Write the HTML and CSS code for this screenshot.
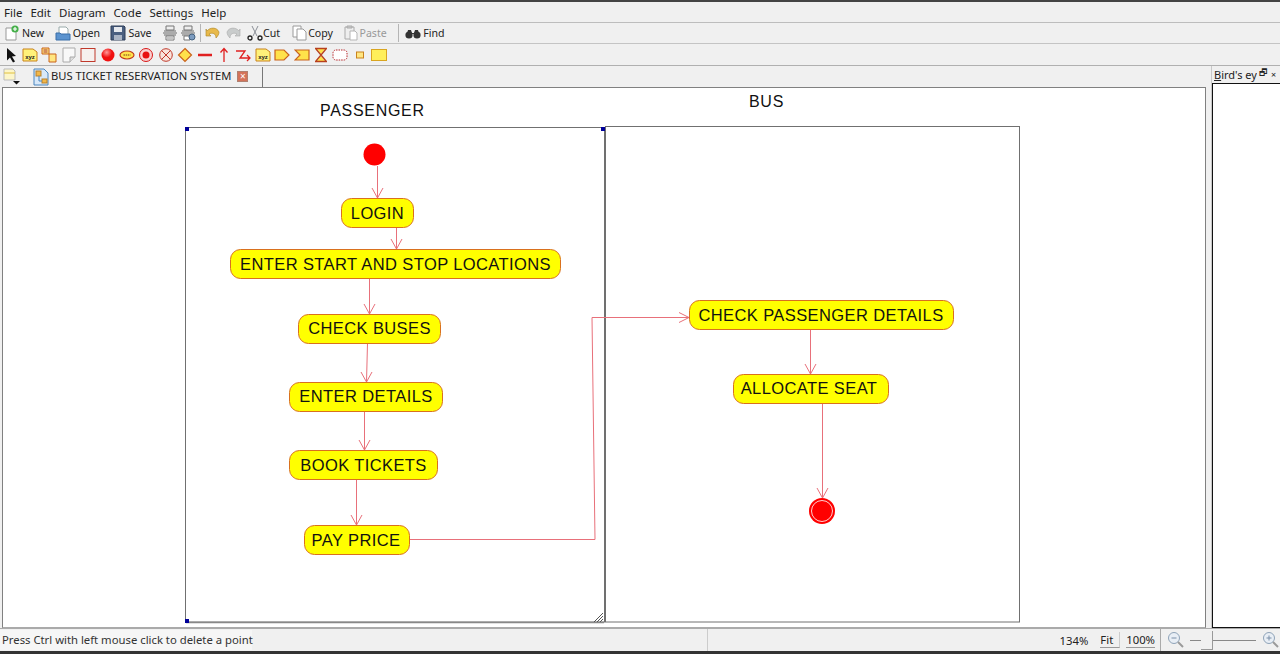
FILE: index.html
```html
<!DOCTYPE html>
<html lang="en">
<head>
    <meta charset="UTF-8">
    <title>Activity diagram editor</title>
    <link rel="stylesheet" href="styles.css">
</head>
<body>
    <nav class="menubar">
        <span>File</span><span>Edit</span><span>Diagram</span><span>Code</span><span>Settings</span><span>Help</span>
    </nav>

    <div class="toolbar">
        <button class="btn"><svg width="16" height="16" viewBox="0 0 16 16"><path d="M2 3h7l3 3v9H2z" fill="#fff" stroke="#999"/><circle cx="11" cy="4" r="3.6" fill="#46b04a"/><path d="M9 4h4M11 2v4" stroke="#fff" stroke-width="1.2"/></svg><span class="btn-label">New</span></button>
        <button class="btn"><svg width="16" height="16" viewBox="0 0 16 16"><path d="M4 2h7l2 2v6H4z" fill="#fff" stroke="#9aa"/><path d="M1 8h4l1 1h9v6H1z" fill="#5b93cf" stroke="#3a6ea8"/></svg><span class="btn-label">Open</span></button>
        <button class="btn"><svg width="16" height="16" viewBox="0 0 16 16"><path d="M1 1h13l1 1v13H1z" fill="#4a5f80" stroke="#2f3f58"/><path d="M4 2h8v5H4z" fill="#e6e9ee"/><path d="M4 10h8v5H4z" fill="#aab4c4"/></svg><span class="btn-label">Save</span></button>
        <button class="btn btn-print"><svg width="16" height="16" viewBox="0 0 16 16"><path d="M4 1h8v4H4z" fill="#eee" stroke="#777"/><path d="M2 6h12M1 8h14M2 10h12" stroke="#666"/><path d="M4 11h8v4H4z" fill="#fff" stroke="#777"/><path d="M5 13h6" stroke="#888"/></svg></button>
        <button class="btn btn-print"><svg width="16" height="16" viewBox="0 0 16 16"><path d="M4 1h8v4H4z" fill="#eee" stroke="#777"/><path d="M2 6h12M1 8h14M2 10h12" stroke="#666"/><path d="M4 11h6v4H4z" fill="#fff" stroke="#777"/><circle cx="12" cy="12" r="3" fill="#7d9cc0" stroke="#44617f"/></svg></button>
        <i class="sep"></i>
        <button class="btn btn-undo"><svg width="16" height="16" viewBox="0 0 16 16"><path d="M2 6c3-4 10-4 12 1 0 2-1 4-3 6 0-4-3-6-7-4l2 2H1V4z" fill="#e8b94a" stroke="#a98324" stroke-width=".6"/></svg></button>
        <button class="btn btn-undo"><svg width="16" height="16" viewBox="0 0 16 16"><path d="M14 6C11 2 4 2 2 7c0 2 1 4 3 6 0-4 3-6 7-4l-2 2h5V4z" fill="#c9cccc" stroke="#aaa" stroke-width=".6"/></svg></button>
        <button class="btn btn-tight btn-cut"><svg width="16" height="16" viewBox="0 0 16 16" fill="none"><path d="M5 1l5 10M11 1L6 11" stroke="#8a8f96"/><circle cx="3" cy="13" r="2" stroke="#222" stroke-width="1.3"/><circle cx="13" cy="13" r="2" stroke="#222" stroke-width="1.3"/></svg><span class="btn-label">Cut</span></button>
        <button class="btn btn-tight"><svg width="16" height="16" viewBox="0 0 16 16"><path d="M1 1h8v11H1z" fill="#fff" stroke="#9a9a9a"/><path d="M5 4h6l3 3v8H5z" fill="#fff" stroke="#9a9a9a"/></svg><span class="btn-label">Copy</span></button>
        <button class="btn btn-tight off"><svg width="16" height="16" viewBox="0 0 16 16"><path d="M2 2h9v12H2z" fill="#eee" stroke="#aaa"/><path d="M4 1h5v2H4z" fill="#ccc" stroke="#aaa"/><path d="M7 6h5l2 2v7H7z" fill="#fff" stroke="#b5b5b5"/></svg><span class="btn-label">Paste</span></button>
        <i class="sep sep-find"></i>
        <button class="btn"><svg width="16" height="16" viewBox="0 0 16 16" fill="#333"><circle cx="4" cy="10" r="3.6"/><circle cx="12" cy="10" r="3.6"/><path d="M3 5h3l1 3h2l1-3h3l1 4H2z"/></svg><span class="btn-label">Find</span></button>
    </div>

    <div class="toolbar toolbar-shapes">
        <span class="tool"><svg width="16" height="16" viewBox="0 0 16 16"><path d="M4 1l9 8-4 .5 3 5-2 1-3-5-3 3z" fill="#111"/></svg></span>
        <span class="tool"><svg width="16" height="16" viewBox="0 0 16 16"><path d="M1 2h10l4 3v9H1z" fill="#fff27a" stroke="#c9821c"/><text x="8" y="12" class="mini">xyz</text></svg></span>
        <span class="tool"><svg width="16" height="16" viewBox="0 0 16 16"><path d="M1 1h7v6H1z" fill="#ffe680" stroke="#c9621c"/><path d="M8 7h7v8H8z" fill="#ffe680" stroke="#c9621c"/><path d="M2.500 3h4M2.500 5h4" stroke="#a33"/></svg></span>
        <span class="tool"><svg width="16" height="16" viewBox="0 0 16 16"><path d="M2 1h12v9l-5 5H2z" fill="#f8f8f8" stroke="#aaa"/><path d="M9 15v-5h5" fill="#ddd" stroke="#aaa"/></svg></span>
        <span class="tool"><svg width="16" height="16" viewBox="0 0 16 16"><rect x="1" y="1.500" width="14" height="13" fill="#f6f0ee" stroke="#c0392b"/></svg></span>
        <span class="tool"><svg width="16" height="16" viewBox="0 0 16 16"><defs><radialGradient id="ball" cx=".4" cy=".3" r=".8"><stop offset="0" stop-color="#ff9a9a"/><stop offset=".5" stop-color="#f01010"/></radialGradient></defs><circle cx="8" cy="8" r="6.500" fill="url(#ball)"/></svg></span>
        <span class="tool"><svg width="16" height="16" viewBox="0 0 16 16"><ellipse cx="8" cy="8" rx="7" ry="4" fill="#ffe24a" stroke="#c03a1c" stroke-width="1.200"/><path d="M4.500 8h7" stroke="#7a3b12" stroke-dasharray="1.500 .7"/></svg></span>
        <span class="tool"><svg width="16" height="16" viewBox="0 0 16 16"><circle cx="8" cy="8" r="6.500" fill="#f8d0d0" stroke="#d81818"/><circle cx="8" cy="8" r="3.500" fill="#e81010"/></svg></span>
        <span class="tool"><svg width="16" height="16" viewBox="0 0 16 16" fill="none" stroke="#c0392b"><circle cx="8" cy="8" r="6.300" fill="#f8e4dc"/><path d="M3.500 3.500l9 9M12.500 3.500l-9 9"/></svg></span>
        <span class="tool"><svg width="16" height="16" viewBox="0 0 16 16"><path d="M8 1.500L14.500 8 8 14.500 1.500 8z" fill="#ffe24a" stroke="#c9621c" stroke-width="1.200"/></svg></span>
        <span class="tool"><svg width="16" height="16" viewBox="0 0 16 16"><path d="M1 8h14" stroke="#e02020" stroke-width="2.500"/></svg></span>
        <span class="tool"><svg width="16" height="16" viewBox="0 0 16 16" fill="none" stroke="#e02020" stroke-width="1.300"><path d="M8 15V2M4.500 5.500L8 1.500l3.500 4"/></svg></span>
        <span class="tool"><svg width="16" height="16" viewBox="0 0 16 16" fill="none" stroke="#e02020" stroke-width="1.300"><path d="M1 4h9L5 11h10M12 8l3 3-3 3"/></svg></span>
        <span class="tool"><svg width="16" height="16" viewBox="0 0 16 16"><path d="M1 2h10l4 3v9H1z" fill="#fff27a" stroke="#c9821c"/><text x="8" y="12" class="mini">xyz</text></svg></span>
        <span class="tool"><svg width="16" height="16" viewBox="0 0 16 16"><path d="M1 3h9l5 5-5 5H1z" fill="#ffe24a" stroke="#c9621c" stroke-width="1.200"/></svg></span>
        <span class="tool"><svg width="16" height="16" viewBox="0 0 16 16"><path d="M1 3h14v10H1l5-5z" fill="#ffe24a" stroke="#c9621c" stroke-width="1.200"/></svg></span>
        <span class="tool"><svg width="16" height="16" viewBox="0 0 16 16"><path d="M4 2h8L8 7z" fill="#ffe24a"/><path d="M4 14h8L8 9z" fill="#ffe24a"/><path d="M2 1.500h12M2 14.500h12M3 2l10 12M13 2L3 14" fill="none" stroke="#b8401c" stroke-width="1.300"/></svg></span>
        <span class="tool"><svg width="16" height="16" viewBox="0 0 16 16"><rect x="1" y="3" width="14" height="10" rx="3" fill="#fff" stroke="#b8282c" stroke-dasharray="1.500 1"/></svg></span>
        <span class="tool"><svg width="16" height="16" viewBox="0 0 16 16"><rect x="4.500" y="5" width="7" height="6" fill="#ffe680" stroke="#c9821c"/></svg></span>
        <span class="tool"><svg width="16" height="16" viewBox="0 0 16 16"><rect x=".500" y="2.500" width="15" height="11" fill="#ffef5a" stroke="#d9a520"/></svg></span>
    </div>

    <div class="main">
        <div class="workspace">
            <div class="tabbar">
                <span class="tab-menu"><svg width="20" height="18" viewBox="0 0 20 18"><path d="M1 1h9l2 2v9H1z" fill="#fdf6c8" stroke="#bbb"/><path d="M1 5h11" stroke="#e0c040"/><path d="M10 13h7l-3.500 3.500z" fill="#111"/></svg></span>
                <div class="tab">
                    <svg width="16" height="18" viewBox="0 0 16 18"><path d="M1 1h10l4 4v12H1z" fill="#d8e8f8" stroke="#4a86c0"/><rect x="3" y="3" width="5" height="5" fill="#f2b84a" stroke="#b8802a"/><rect x="9" y="11" width="5" height="4" fill="#f2b84a" stroke="#b8802a"/><path d="M6 8v5h3" fill="none" stroke="#4a86c0"/></svg>
                    <span class="tab-title">BUS TICKET RESERVATION SYSTEM</span>
                    <span class="tab-close">×</span>
                </div>
            </div>
            <div class="canvas">
                <svg class="diagram" width="1203" height="540" viewBox="3 88 1203 540">
                    <text x="320" y="116" class="title">PASSENGER</text>
                    <text x="749" y="107" class="title">BUS</text>

                    <rect x="185.500" y="127.500" width="419" height="494.500" class="lane"/>
                    <rect x="605.500" y="126.500" width="414" height="495.500" class="lane"/>
                    <path d="M186 622.500h418" class="lane-edge"/>
                    <path d="M594 622l9-9M597 622l6-6M600 622l3-3" class="hatch"/>
                    <rect x="185" y="127" width="4" height="4" class="handle"/>
                    <rect x="601" y="127" width="4" height="4" class="handle"/>
                    <rect x="185" y="619" width="4" height="4" class="handle"/>

                    <g class="edge">
                        <path d="M377.500 166v32M372 188l5.500 10 5.500-10"/>
                        <path d="M396.500 227v22M391 239l5.500 10 5.500-10"/>
                        <path d="M369.500 278v36M364 304l5.500 10 5.500-10"/>
                        <path d="M367.500 343l-1 39M361 372l5.500 10 5.500-10"/>
                        <path d="M364.500 411v39M359 440l5.500 10 5.500-10"/>
                        <path d="M356.500 479v46M351 515l5.500 10 5.500-10"/>
                        <path d="M409 539.500h186l-3-222h97M679 312.500l10 5-10 5"/>
                        <path d="M810.500 329v45M805 364l5.500 10 5.500-10"/>
                        <path d="M822.500 403v95M817 488l5.500 10 5.500-10"/>
                    </g>

                    <circle cx="374.500" cy="154.500" r="11" class="start"/>

                    <rect x="341.500" y="198.500" width="72" height="29" rx="10" class="node"/>
                    <text x="377.500" y="219" class="label">LOGIN</text>
                    <rect x="230.500" y="249.500" width="330" height="29" rx="10" class="node"/>
                    <text x="395.500" y="270" class="label">ENTER START AND STOP LOCATIONS</text>
                    <rect x="298.500" y="314.500" width="142" height="29" rx="10" class="node"/>
                    <text x="369.500" y="334" class="label">CHECK BUSES</text>
                    <rect x="289.500" y="382.500" width="153" height="29" rx="10" class="node"/>
                    <text x="366" y="402" class="label">ENTER DETAILS</text>
                    <rect x="289.500" y="450.500" width="148" height="29" rx="10" class="node"/>
                    <text x="363.500" y="471" class="label">BOOK TICKETS</text>
                    <rect x="304.500" y="525.500" width="105" height="29" rx="10" class="node"/>
                    <text x="356" y="546" class="label">PAY PRICE</text>
                    <rect x="689.500" y="300.500" width="264" height="29" rx="10" class="node"/>
                    <text x="821" y="321" class="label">CHECK PASSENGER DETAILS</text>
                    <rect x="733.500" y="374.500" width="155" height="29" rx="10" class="node"/>
                    <text x="809" y="394" class="label">ALLOCATE SEAT</text>

                    <circle cx="822" cy="511" r="13" class="start"/>
                    <circle cx="822" cy="511" r="10.500" class="end-ring"/>
                </svg>
            </div>
        </div>
        <aside class="birds">
            <div class="birds-head"><span class="birds-title"><u>B</u>ird's ey</span><span class="birds-btn">🗗</span><span class="birds-btn">×</span></div>
            <div class="birds-view"></div>
        </aside>
    </div>

    <footer class="statusbar">
        <div class="status-msg">Press Ctrl with left mouse click to delete a point</div>
        <div class="status-fill"></div>
        <div class="status-zoom">
            <span class="zoom-val">134%</span>
            <span class="zoom-btn">Fit</span>
            <span class="zoom-btn zoom-btn-last">100%</span>
        </div>
        <span class="zoom-icon"><svg width="18" height="18" viewBox="0 0 18 18" fill="none"><circle cx="7" cy="7" r="5.500" fill="#e8eef5" stroke="#8fa3b8"/><path d="M4.500 7h5" stroke="#7a8fa8"/><path d="M11 11l5 5" stroke="#9a9a9a" stroke-width="2"/></svg></span>
        <div class="slider"><i class="thumb"></i></div>
        <span class="zoom-icon"><svg width="18" height="18" viewBox="0 0 18 18" fill="none"><circle cx="7" cy="7" r="5.500" fill="#e8eef5" stroke="#8fa3b8"/><path d="M4.500 7h5M7 4.500v5" stroke="#7a8fa8"/><path d="M11 11l5 5" stroke="#9a9a9a" stroke-width="2"/></svg></span>
    </footer>
</body>
</html>
```

FILE: styles.css
```css
html, body {
    margin: 0;
    height: 100%;
    overflow: hidden;
}
body {
    display: flex;
    flex-direction: column;
    background-color: #f0f0f0;
    color: #222;
    font-family: "Noto Sans", "Open Sans", sans-serif;
    font-size: 10.6px;
    border-top: 2px solid #444;
    border-bottom: 3px solid #333;
    box-sizing: border-box;
}
.menubar {
    display: flex;
    gap: 8px;
    height: 20px;
    padding-left: 4px;
    align-items: center;
    font-size: 11.5px;
    border-bottom: 1px solid #bdbdbd;
    flex: none;
}
.toolbar {
    display: flex;
    align-items: center;
    height: 20px;
    padding-left: 4px;
    border-bottom: 1px solid #c4c4c4;
    flex: none;
}
.btn {
    display: flex;
    align-items: center;
    gap: 2px;
    padding: 0;
    margin-right: 10.5px;
    border: none;
    background: none;
    color: #222;
    font: inherit;
}
.btn-tight {
    gap: 0;
}
.btn-label {
    margin-bottom: 1px;
}
.btn-print {
    margin-right: 2px;
}
.btn-undo {
    margin-right: 4px;
}
.btn-cut {
    margin-left: 2px;
    margin-right: 12px;
}
.off {
    color: #999;
}
.sep {
    width: 1px;
    height: 18px;
    margin: 0 4px 0 2px;
    background-color: #b5b5b5;
}
.sep-find {
    margin: 0 6px 0 1px;
}
.toolbar-shapes {
    height: 21px;
    padding-left: 1px;
    border-bottom: 1px solid #b0b0b0;
}
.tool {
    display: flex;
    justify-content: center;
    width: 19.4px;
    flex: none;
}
.mini {
    font-family: "Liberation Sans", sans-serif;
    font-size: 6px;
    font-weight: bold;
    text-anchor: middle;
    fill: #222;
}
.main {
    display: flex;
    flex: 1;
    min-height: 0;
}
.workspace {
    display: flex;
    flex-direction: column;
    flex: 1;
    min-width: 0;
    padding: 0 5px 0 2px;
    border-right: 1px solid #c8c8c8;
}
.tabbar {
    display: flex;
    align-items: center;
    height: 21px;
    flex: none;
}
.tab-menu {
    display: flex;
    width: 31px;
    padding-left: 1px;
    box-sizing: border-box;
}
.tab {
    display: flex;
    align-items: center;
    gap: 2px;
    width: 229px;
    height: 20px;
    border-right: 1px solid #777;
}
.tab-title {
    margin-bottom: 2px;
    font-size: 11.2px;
    white-space: nowrap;
}
.tab-close {
    width: 9px;
    height: 9px;
    margin-left: 4px;
    line-height: 9px;
    text-align: center;
    font-size: 10px;
    color: #fff;
    background-color: #d4735a;
    border: 1px solid #b08070;
}
.canvas {
    flex: 1;
    min-height: 0;
    background: #fff;
    border: 1px solid #808080;
    border-bottom-color: #aaa;
}
.diagram {
    display: block;
}
.title {
    font-family: "Liberation Sans", Arial, sans-serif;
    font-size: 16px;
    letter-spacing: .7px;
    fill: #111;
}
.lane {
    fill: none;
    stroke: #707070;
}
.lane-edge {
    fill: none;
    stroke: #888;
    stroke-width: 1.5;
}
.hatch {
    fill: none;
    stroke: #555;
}
.handle {
    fill: #000099;
}
.edge {
    fill: none;
    stroke: #e8707a;
}
.start {
    fill: #ff0000;
}
.end-ring {
    fill: #ff0000;
    stroke: #ffd0d0;
}
.node {
    fill: #ffff00;
    stroke: #d9701e;
}
.label {
    font-family: "Liberation Sans", Arial, sans-serif;
    font-size: 16.5px;
    letter-spacing: .4px;
    text-anchor: middle;
    fill: #111;
}
.birds {
    display: flex;
    flex-direction: column;
    width: 68px;
    flex: none;
}
.birds-head {
    display: flex;
    align-items: center;
    padding: 0 0 1px 2px;
    box-sizing: border-box;
    height: 17px;
    font-size: 11px;
    white-space: nowrap;
    overflow: hidden;
}
.birds-title {
    width: 43px;
    overflow: hidden;
}
.birds-btn {
    width: 11px;
    font-size: 9px;
    text-align: center;
}
.birds-view {
    flex: 1;
    background: #fff;
    border: 1px solid #111;
    border-right: none;
}
.statusbar {
    display: flex;
    align-items: center;
    height: 23px;
    flex: none;
    border-top: 1px solid #aaa;
    font-size: 11.3px;
    box-sizing: border-box;
}
.status-msg {
    width: 252px;
    padding-left: 2px;
    box-sizing: border-box;
    line-height: 20px;
    background-color: #f6f6f6;
    white-space: nowrap;
    color: #333;
}
.status-fill {
    width: 455px;
}
.status-zoom {
    display: flex;
    align-items: center;
    justify-content: flex-end;
    width: 454px;
    height: 22px;
    border-left: 1px solid #ccc;
    border-right: 1px solid #aaa;
    box-sizing: border-box;
    padding-right: 5px;
}
.zoom-val {
    margin-right: 12px;
}
.zoom-btn {
    padding: 0 6px 0 0;
    margin-right: 6px;
    border-bottom: 1px solid #999;
    border-right: 1px solid #ccc;
}
.zoom-btn-last {
    margin-right: 0;
    padding: 0;
    border-right: none;
}
.zoom-icon {
    display: flex;
    width: 18px;
    margin-left: 6px;
    flex: none;
}
.slider {
    position: relative;
    width: 66px;
    height: 1px;
    margin-left: 5px;
    background-color: #888;
    flex: none;
}
.thumb {
    position: absolute;
    left: 11px;
    top: -9px;
    width: 11px;
    height: 18px;
    background-color: #f0f0f0;
    border-right: 1px solid #999;
    border-bottom: 1px solid #999;
}
```
